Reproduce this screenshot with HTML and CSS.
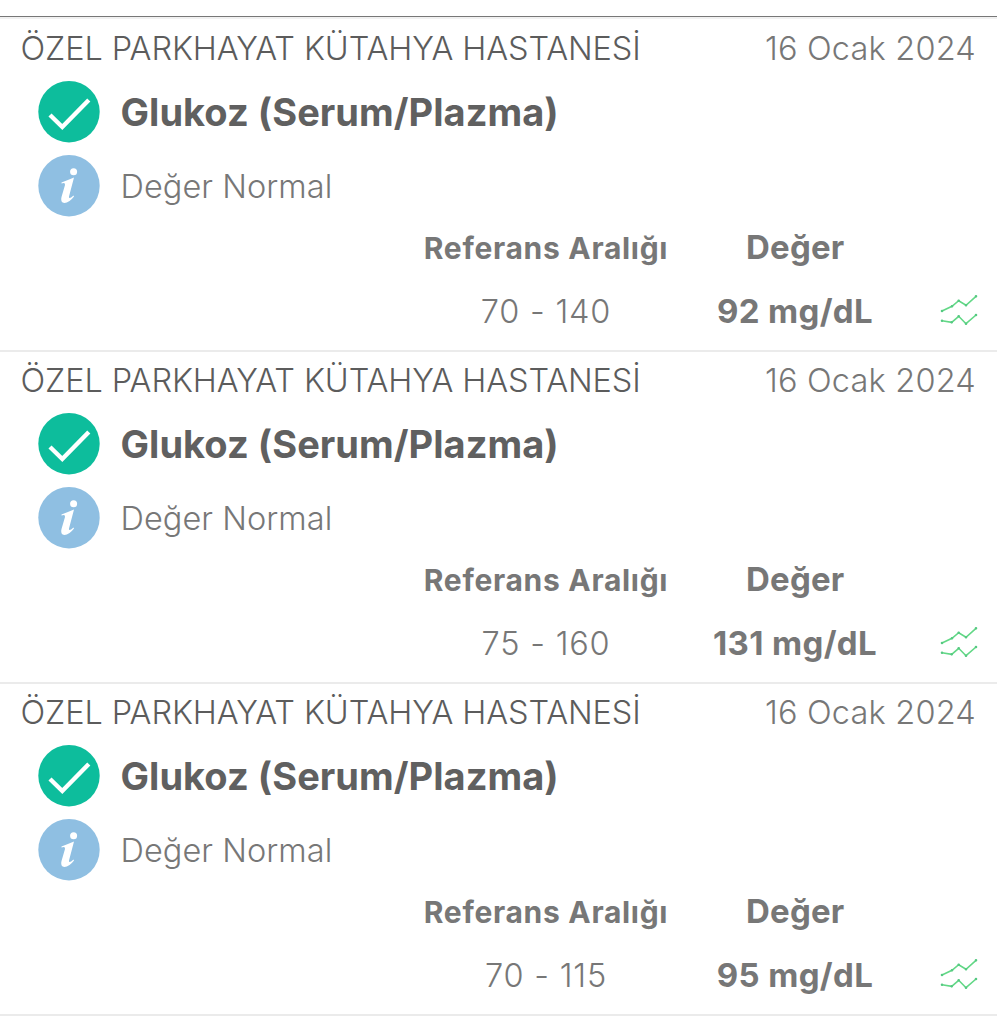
FILE: index.html
```html
<!DOCTYPE html>
<html lang="tr"><head><meta charset="utf-8"><title>Tahlil Sonuçları</title><link rel="stylesheet" href="styles.css"></head>
<body><main class="results" id="results"></main>
<template id="card"><article class="result">
<header class="head"><span class="hospital">ÖZEL PARKHAYAT KÜTAHYA HASTANESİ</span><span class="date">16 Ocak 2024</span></header>
<div class="row"><svg class="icon" viewBox="0 0 62 62"><circle cx="31" cy="30.700" r="30.700" fill="#0dbd9c"/><path d="M12 34L24.300 46L50.800 19" fill="none" stroke="#fff" stroke-width="4.400"/></svg><h2 class="title">Glukoz (Serum/Plazma)</h2></div>
<div class="row second"><svg class="icon" viewBox="0 0 62 62"><circle cx="31" cy="30.700" r="30.700" fill="#8fbfe2"/><circle cx="35.600" cy="16.700" r="3.500" fill="#fff"/><path d="M23.500 27.500Q30 25 36 22.500L31 41.500Q30.500 45 35.500 40.500L36 41.500Q31 48 26.500 48Q22 47.500 23.500 42L27 30Q27.500 27 23.500 28.500Z" fill="#fff"/></svg><span class="status">Değer Normal</span></div>
<div class="values"><b class="ref">Referans Aralığı</b><b class="label">Değer</b><span class="range"></span><b class="value"></b><svg class="trend" viewBox="0 0 38 32"><g fill="none" stroke="#62d886" stroke-width="1.600"><path d="M2 16L12 11.300L18.700 5.700L26 10.300L36 1.300"/><path d="M2 25.700L11.700 27.300L18.700 21.300L26 28.700L36 20"/></g><path d="M2 16h0M12 11.300h0M18.700 5.700h0M26 10.300h0M36 1.300h0M2 25.700h0M11.700 27.300h0M18.700 21.300h0M26 28.700h0M36 20h0" stroke="#56c982" stroke-width="2.600" stroke-linecap="round"/></svg></div>
</article></template><script src="script.js"></script></body></html>
```
FILE: styles.css
```css
*{box-sizing:border-box}
body{margin:0;background:#fff;color:#777;font-family:Inter,"Liberation Sans",sans-serif;overflow:hidden}
.results{padding-top:16px;height:1024px}
.result{height:332px;border-bottom:2px solid #ebebeb;padding:11px 21px 0;overflow:hidden}
.result:first-child{height:336px;border-top:1px solid #777;padding-top:14px;box-shadow:inset 0 2px #f1f1f1}
.head{height:36px;display:flex;justify-content:space-between;font-size:32.500px;line-height:36px;font-weight:300;white-space:nowrap}
.hospital{color:#5c5c5c;letter-spacing:-.100px;margin-left:-.500px}
.date{letter-spacing:.200px}
.row{height:62px;display:flex;align-items:center;gap:20.500px;margin:14px 0 0 17px}
.second{margin-top:12px}
.icon{width:62px;height:62px;flex:none}
.title{margin:0;font-size:38px;font-weight:700;letter-spacing:.050px;color:#606060;white-space:nowrap}
.status{font-size:32.500px;font-weight:300;letter-spacing:.050px;white-space:nowrap}
.values{display:grid;grid-template-columns:280px 218px 75px;grid-template-rows:64px 64px;align-items:center;justify-items:center;margin:-2px -18px 0 385px;font-size:33px;white-space:nowrap}
.values b{font-weight:700}
.values .ref{font-size:30px;letter-spacing:.700px;padding-top:2px}
.label{grid-column:2 / 4;justify-self:start;margin-left:60px;letter-spacing:.200px}
.range{font-size:32.500px;font-weight:300;letter-spacing:.800px}
.value{letter-spacing:.350px}
.trend{width:38px;height:32px;justify-self:end;margin-right:1px}
```
FILE: script.js
```js
const readings=[["70 - 140","92 mg/dL"],["75 - 160","131 mg/dL"],["70 - 115","95 mg/dL"]];
const template=document.getElementById("card");
for(const [range,value] of readings){
  const card=template.content.cloneNode(true);
  card.querySelector(".range").textContent=range;
  card.querySelector(".value").textContent=value;
  document.getElementById("results").append(card);
}
```
